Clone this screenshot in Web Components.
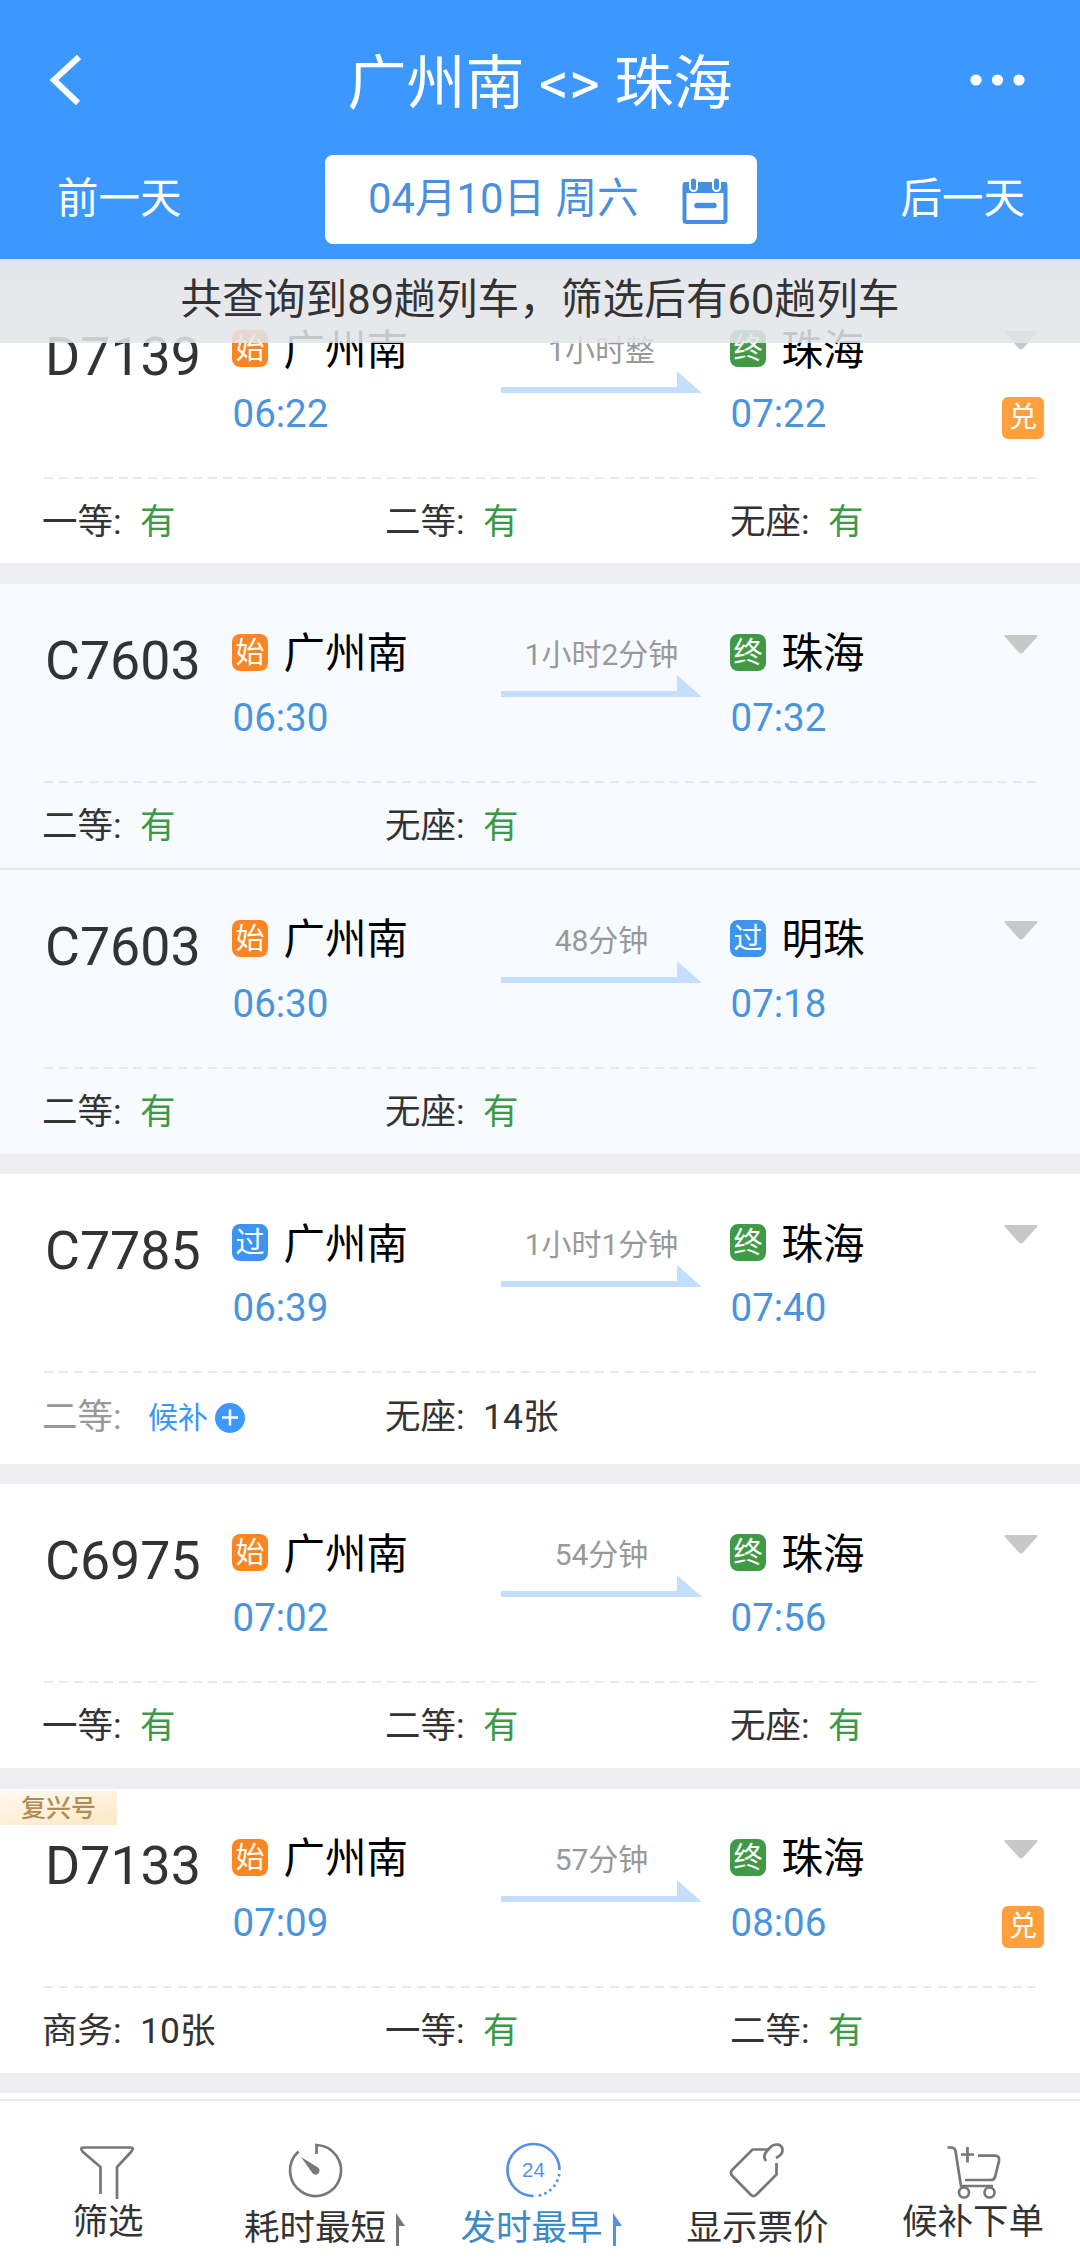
<!DOCTYPE html>
<html lang="zh-CN">
<head>
<meta charset="utf-8">
<title>车票查询</title>
<style>
	body {
		margin: 0;
		background: #eeeef2;
		font-family: Roboto, "Noto Sans CJK SC", sans-serif;
		color: #333;
	}
</style>
</head>
<body>

<train-app>
	<app-header slot="header" date="04月10日 周六">广州南 &lt;&gt; 珠海</app-header>
	<result-notice slot="notice">共查询到89趟列车，筛选后有60趟列车</result-notice>

	<train-card class="first" number="D7139" duration="1小时整" exchange>
		<train-stop slot="from" kind="始" time="06:22">广州南</train-stop>
		<train-stop slot="to" kind="终" time="07:22">珠海</train-stop>
		<seat-item name="一等">有</seat-item>
		<seat-item name="二等">有</seat-item>
		<seat-item name="无座">有</seat-item>
	</train-card>
	<train-card class="tinted joined" number="C7603" duration="1小时2分钟">
		<train-stop slot="from" kind="始" time="06:30">广州南</train-stop>
		<train-stop slot="to" kind="终" time="07:32">珠海</train-stop>
		<seat-item name="二等">有</seat-item>
		<seat-item name="无座">有</seat-item>
	</train-card>
	<train-card class="tinted" number="C7603" duration="48分钟">
		<train-stop slot="from" kind="始" time="06:30">广州南</train-stop>
		<train-stop slot="to" kind="过" time="07:18">明珠</train-stop>
		<seat-item name="二等">有</seat-item>
		<seat-item name="无座">有</seat-item>
	</train-card>
	<train-card class="tall" number="C7785" duration="1小时1分钟">
		<train-stop slot="from" kind="过" time="06:39">广州南</train-stop>
		<train-stop slot="to" kind="终" time="07:40">珠海</train-stop>
		<seat-item name="二等" status="waitlist">候补</seat-item>
		<seat-item name="无座" status="count">14张</seat-item>
	</train-card>
	<train-card number="C6975" duration="54分钟">
		<train-stop slot="from" kind="始" time="07:02">广州南</train-stop>
		<train-stop slot="to" kind="终" time="07:56">珠海</train-stop>
		<seat-item name="一等">有</seat-item>
		<seat-item name="二等">有</seat-item>
		<seat-item name="无座">有</seat-item>
	</train-card>
	<train-card number="D7133" duration="57分钟" tag="复兴号" exchange>
		<train-stop slot="from" kind="始" time="07:09">广州南</train-stop>
		<train-stop slot="to" kind="终" time="08:06">珠海</train-stop>
		<seat-item name="商务" status="count">10张</seat-item>
		<seat-item name="一等">有</seat-item>
		<seat-item name="二等">有</seat-item>
	</train-card>

	<tab-item slot="tabs" icon="filter">筛选</tab-item>
	<tab-item slot="tabs" icon="timer" sort>耗时最短</tab-item>
	<tab-item slot="tabs" icon="clock" sort active>发时最早</tab-item>
	<tab-item slot="tabs" icon="price">显示票价</tab-item>
	<tab-item slot="tabs" icon="cart">候补下单</tab-item>
</train-app>

<script>
class BaseElement extends HTMLElement {
	render(html) {
		this.attachShadow({ mode: 'open' }).innerHTML = html
	}
}

class TrainApp extends BaseElement {
	constructor() {
		super()
		this.render(`
			<style>
				:host {
					display: flex;
					flex-direction: column;
					height: 2267px;
					overflow: hidden;
				}

				main {
					position: relative;
					flex: 1;
					min-height: 0;
					overflow: hidden;
				}

				/* the notice floats over the scrolled list */
				.notice {
					position: absolute;
					top: 0;
					left: 0;
					right: 0;
					z-index: 1;
				}

				.list {
					display: flex;
					flex-direction: column;
					padding-top: 21px;
				}

				.rest {
					height: 30px;
					background: #fff;
				}

				nav {
					display: grid;
					grid-template-columns: 216px 217px 216px 217px 214px;
					height: 166px;
					border-top: 2px solid #e8e9ea;
					background: #fff;
				}
			</style>
			<slot name="header"></slot>
			<main>
				<div class="notice"><slot name="notice"></slot></div>
				<div class="list"><slot></slot><div class="rest"></div></div>
			</main>
			<nav><slot name="tabs"></slot></nav>
		`)
	}
}

class AppHeader extends BaseElement {
	connectedCallback() {
		this.render(`
			<style>
				:host {
					display: block;
					flex: none;
					height: 259px;
					background: #3c98fc;
					color: #fff;
				}

				.bar, .days {
					display: grid;
					align-items: center;
				}

				.bar {
					grid-template-columns: 130px 1fr 130px;
					height: 155px;
					padding-top: 48px;
					box-sizing: border-box;
				}

				.bar svg {
					display: block;
					margin-top: -43px;
				}

				.back { margin-left: 47px; }
				.more { margin-left: 18px; }

				h1 {
					margin: -36px 0 0;
					font-size: 59px;
					line-height: 70px;
					font-weight: 400;
					text-align: center;
					white-space: nowrap;
				}

				.days {
					grid-template-columns: 325px 432px 1fr;
					height: 89px;
					font-size: 41.500px;
					line-height: 50px;
				}

				.prev { padding-left: 57px; }
				.next { padding-right: 55px; text-align: right; }

				.date {
					display: flex;
					align-items: center;
					justify-content: space-between;
					height: 89px;
					padding: 0 28px 0 43px;
					box-sizing: border-box;
					border-radius: 8px;
					background: #fff;
					color: #4a90dc;
					font-size: 41.700px;
				}

				.date span, .prev, .next {
					position: relative;
					top: -1px;
				}
			</style>
			<div class="bar">
				<svg class="back" width="36" height="52" viewBox="0 0 36 52" fill="none" stroke="#fff" stroke-width="6">
					<path d="M32 3L7 26L31 49"/>
				</svg>
				<h1><slot></slot></h1>
				<svg class="more" width="60" height="14" viewBox="0 0 60 14" fill="#fff">
					<circle cx="8" cy="7" r="5.6"/><circle cx="29.500" cy="7" r="5.6"/><circle cx="51" cy="7" r="5.6"/>
				</svg>
			</div>
			<div class="days">
				<span class="prev">前一天</span>
				<div class="date">
					<span>${this.getAttribute('date')}</span>
					<svg width="48" height="48" viewBox="0 0 48 48" fill="none" stroke="#458fe0">
						<rect x="3.500" y="8" width="41" height="38" rx="2" stroke-width="4"/>
						<path d="M2 17V8Q2 6 4 6H44Q46 6 46 8V17Z" fill="#458fe0" stroke="none"/>
						<path d="M12.500 5V11.500M35.500 5V11.500" stroke="#fff" stroke-width="9" stroke-linecap="round"/>
						<path d="M12.500 5V11.500M35.500 5V11.500" stroke-width="5" stroke-linecap="round"/>
						<path d="M16 29.500H33" stroke-width="5.500" stroke-linecap="round"/>
					</svg>
				</div>
				<span class="next">后一天</span>
			</div>
		`)
	}
}

class ResultNotice extends BaseElement {
	constructor() {
		super()
		this.render(`
			<style>
				:host {
					display: block;
					height: 84px;
					box-sizing: border-box;
					border-top: 2px solid #d4e6fa;
					background: rgba(227, 229, 233, .87);
					font-size: 41.700px;
					line-height: 78px;
					text-align: center;
					white-space: nowrap;
				}
			</style>
			<slot></slot>
		`)
	}
}

class TrainCard extends BaseElement {
	connectedCallback() {
		const tag = this.getAttribute('tag')
		this.render(`
			<style>
				:host {
					display: flex;
					flex-direction: column;
					position: relative;
					flex: none;
					height: 284px;
					margin-bottom: 20.500px;
					background: #fff;
				}

				:host(.tinted) { background: #f7fbff; }
				:host(.first) { height: 283px; }
				:host(.tall) { height: 289.500px; }
				:host(.joined) {
					margin-bottom: 0;
					border-bottom: 2px solid #e4e7ea;
				}

				.trip {
					display: grid;
					grid-template-columns: 188px 269px 229px 272px 1fr;
					height: 197px;
					padding-left: 44px;
				}

				.number {
					padding: 46px 0 0 1px;
					font-size: 53.700px;
					line-height: 62px;
				}

				.way {
					width: 201px;
					padding-top: 51px;
					color: #999;
					font-size: 30px;
					line-height: 40px;
					text-align: center;
				}

				.way svg { display: block; }

				.side {
					display: flex;
					flex-direction: column;
					align-items: flex-start;
					padding-top: 51px;
				}

				.side svg { margin-left: 2px; }

				.exchange {
					width: 42px;
					height: 42px;
					margin-top: 47px;
					border-radius: 6px;
					background: #ffa03c;
					color: #fff;
					font-size: 28px;
					line-height: 42px;
					text-align: center;
				}

				.dash {
					height: 2px;
					margin: 0 42px 0 44px;
					background: repeating-linear-gradient(90deg, #e8e9eb 0 9px, transparent 9px 14.900px);
				}

				.seats {
					display: grid;
					grid-template-columns: 343px 345px 1fr;
					padding: 18px 0 0 42px;
				}

				/* train type ribbon in the card corner */
				.tag {
					position: absolute;
					top: 2px;
					left: 0;
					width: 117px;
					height: 34px;
					padding-left: 21px;
					box-sizing: border-box;
					background: linear-gradient(170deg, #fffaf2, #fdeacb 85%);
					color: #b08d55;
					font-size: 25px;
					line-height: 35px;
					font-weight: 500;
				}
			</style>
			${tag ? `<div class="tag">${tag}</div>` : ''}
			<div class="trip">
				<div class="number">${this.getAttribute('number')}</div>
				<slot name="from"></slot>
				<div class="way">
					${this.getAttribute('duration')}
					<svg width="201" height="22" viewBox="0 0 201 22" fill="#c4dffe">
						<path d="M0 16H176V0L201 22H0Z"/>
					</svg>
				</div>
				<slot name="to"></slot>
				<div class="side">
					<svg width="34" height="19" viewBox="0 0 34 19" fill="#c8c8c8">
						<path d="M2 0H32Q35 0 33 2L19 17.500Q17 19.500 15 17.500L1 2Q-1 0 2 0Z"/>
					</svg>
					${this.hasAttribute('exchange') ? '<div class="exchange">兑</div>' : ''}
				</div>
			</div>
			<div class="dash"></div>
			<div class="seats"><slot></slot></div>
		`)
	}
}

const KIND_COLORS = { '始': '#f98622', '终': '#409a45', '过': '#3c94ee' }

class TrainStop extends BaseElement {
	connectedCallback() {
		const kind = this.getAttribute('kind')
		this.render(`
			<style>
				:host {
					display: block;
					padding-top: 50px;
				}

				.station {
					display: flex;
					align-items: center;
					gap: 15.500px;
					height: 37px;
					color: #000;
					font-size: 41.500px;
					line-height: 50px;
				}

				.name { padding-top: 4px; }

				.kind {
					width: 36px;
					height: 37px;
					border-radius: 8px;
					background: ${KIND_COLORS[kind]};
					color: #fff;
					font-size: 29px;
					line-height: 38px;
					text-align: center;
				}

				.time {
					margin: 24px 0 0 0.500px;
					color: #4a94dc;
					font-size: 38.500px;
					line-height: 46px;
				}
			</style>
			<div class="station"><span class="kind">${kind}</span><span class="name"><slot></slot></span></div>
			<div class="time">${this.getAttribute('time')}</div>
		`)
	}
}

class SeatItem extends BaseElement {
	connectedCallback() {
		const status = this.getAttribute('status') || 'plenty'
		this.render(`
			<style>
				:host {
					display: flex;
					align-items: center;
					font-size: 35.500px;
					line-height: 50px;
				}

				.name { width: 98px; }
				.plenty { color: #3c9a46; }
				.name.waitlist { width: 106px; color: #999; }

				.value.waitlist {
					display: flex;
					align-items: center;
					gap: 7px;
					padding-top: 2px;
					color: #3c98f4;
					font-size: 30px;
				}
			</style>
			<span class="name ${status === 'waitlist' ? status : ''}">${this.getAttribute('name')}:</span>
			<span class="value ${status}">
				<slot></slot>
				${status === 'waitlist' ? `
				<svg width="30" height="30" viewBox="0 0 30 30">
					<circle cx="15" cy="15" r="15" fill="#3c98fc"/>
					<path d="M7 14.500H23M15 6.500V22.500" stroke="#fff" stroke-width="2.500"/>
				</svg>` : ''}
			</span>
		`)
	}
}

const TAB_ICONS = {
	filter: `
		<path d="M19.500 51V24L2 9Q-2 4.500 3 4.500H49Q54 4.500 50 9L36 24V56"/>`,
	timer: `
		<path d="M28.500 11V2A25.500 25.500 0 1 1 10.500 8.500"/>
		<path d="M13 14L30 24.500A4 4 0 1 1 24 29.500Z" fill="currentColor" stroke="none"/>`,
	clock: `
		<path d="M55.500 27A26 26 0 1 0 29.500 53"/>
		<path d="M55.300 31A26 26 0 0 1 31.500 53" stroke-dasharray="2.500 3.300"/>
		<text x="29.500" y="34" fill="currentColor" stroke="none" font-family="Liberation Sans" font-size="20.500" text-anchor="middle">24</text>`,
	price: `
		<path d="M39 6.500H22.500L2 27Q0 30 2 32.500L21 52Q23.500 54 26 52L46.500 31.500V20"/>
		<path d="M36 18C33 14 34 11 37 8L40 4.500C45 -0.500 52.500 1 52.500 7.500C52.500 10.500 50 13 46 15"/>`,
	cart: `
		<path d="M1.500 4.500H5Q9 4.500 9.500 8L15 43H47"/>
		<path d="M32 12.700H49Q54 13 53 18L49 34Q48 37 45 37H19"/>
		<path d="M21.500 4V19.500M15 11.500H28"/>
		<circle cx="18" cy="49.500" r="5"/><circle cx="43.500" cy="49.500" r="5"/>`
}

class TabItem extends BaseElement {
	connectedCallback() {
		this.render(`
			<style>
				:host {
					display: grid;
					grid-template-columns: auto auto;
					justify-content: center;
					justify-items: center;
					align-content: start;
					padding-top: 42px;
					color: #333;
					font-size: 35.500px;
					line-height: 48px;
					white-space: nowrap;
				}

				:host([active]) { color: #3c8ac8; }

				svg {
					display: block;
					overflow: visible;
					color: #777;
				}

				:host([active]) svg { color: #5590e6; }

				.icon { grid-column: 1; }
				.label { grid-column: 1; margin-top: ${/filter|cart/.test(this.getAttribute('icon')) ? -1 : 5}px; }
				.arrow { grid-column: 2; margin: 14px 0 0 10px; }
			</style>
			<svg class="icon" width="54" height="56" viewBox="0 0 54 56" fill="none" stroke="currentColor" stroke-width="2.700">
				${TAB_ICONS[this.getAttribute('icon')]}
			</svg>
			<span class="label"><slot></slot></span>
			${this.hasAttribute('sort') ? `
			<svg class="arrow" width="9" height="33" viewBox="0 0 9 33" fill="currentColor">
				<path d="M0 0L9 13H3V33H0Z"/>
			</svg>` : ''}
		`)
	}
}

customElements.define('train-app', TrainApp)
customElements.define('app-header', AppHeader)
customElements.define('result-notice', ResultNotice)
customElements.define('train-card', TrainCard)
customElements.define('train-stop', TrainStop)
customElements.define('seat-item', SeatItem)
customElements.define('tab-item', TabItem)
</script>
</body>
</html>
